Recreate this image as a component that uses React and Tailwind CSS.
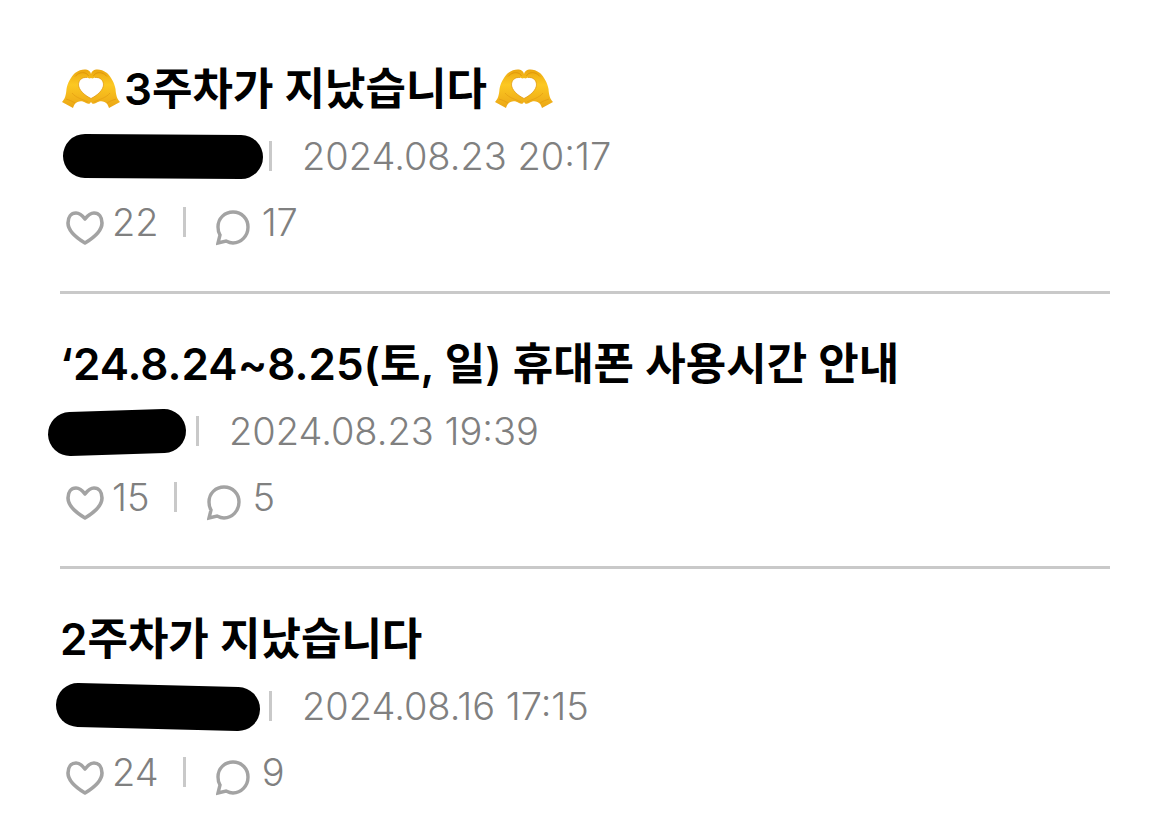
const posts = [
  {
    id: 1,
    title: "3주차가 지났습니다",
    hands: true,
    date: "2024.08.23 20:17",
    likes: 22,
    comments: 17,
    authorWidth: "w-[209px]",
    marker: { left: "left-0", width: 209, from: [25, 27], to: [181, 28] },
  },
  {
    id: 2,
    title: "‘24.8.24~8.25(토, 일) 휴대폰 사용시간 안내",
    hands: false,
    date: "2024.08.23 19:39",
    likes: 15,
    comments: 5,
    authorWidth: "w-[136px]",
    marker: { left: "-left-4", width: 150, from: [26, 30], to: [120, 27] },
  },
  {
    id: 3,
    title: "2주차가 지났습니다",
    hands: false,
    date: "2024.08.16 17:15",
    likes: 24,
    comments: 9,
    authorWidth: "w-[209px]",
    marker: { left: "-left-2", width: 216, from: [26, 26], to: [186, 30] },
  },
];

const Hand = () => (
  <g>
    <path
      d="M0 33 C3 30 4 26 4.500 20 C5.500 14 9 8 13 4 C17 1 21 0 24 0.500 C26.500 1 28.500 2.500 29 5 L29 9 C27.500 10 26 9 25 8.500 C20 8 16.500 11 16.500 16 C17 21 22 26 29 29.500 L29 33 C27.500 35.500 26 35 24 34 C21 32 18 32 15.500 33 C13 34 12 36 11 39 Z"
      fill="url(#skin)"
    />
    <path d="M13 7.500 C16 4 20 3 23 4 C25 4.500 26 6 26.500 7" fill="none" stroke="#e0970a" strokeWidth="1" />
    <path d="M25 8.500 C20 8 16.500 11 16.500 16 C17 21 22 26 29 29.500" fill="none" stroke="#dc930c" strokeWidth="0.7" />
    <path d="M10 24 C14 29 20 30 26 33" fill="none" stroke="#e9a515" strokeWidth="1" />
    <path d="M4 30 C7 31 10 32 13 34" fill="none" stroke="#e6a013" strokeWidth="1" />
  </g>
);

const HeartHands = () => (
  <svg viewBox="0 0 58 40" className="h-10 w-[58px] shrink-0" role="img" aria-label="heart hands">
    <defs>
      <linearGradient id="skin" x1="0" y1="0" x2="0" y2="1">
        <stop offset="0" stopColor="#eba710" />
        <stop offset="0.4" stopColor="#fcc822" />
        <stop offset="1" stopColor="#eba615" />
      </linearGradient>
    </defs>
    <Hand />
    <g transform="translate(58 0) scale(-1 1)">
      <Hand />
    </g>
  </svg>
);

const HeartIcon = () => (
  <svg viewBox="0 0 38 34" className="h-[34px] w-[38px]" fill="none" stroke="#a3a3a3" strokeWidth="3.6" strokeLinejoin="round">
    <path d="M19 8 C16 4 13 2 10 2 C5 2 2 6 2 12 C2 20 9 26 19 32 C29 26 36 20 36 12 C36 6 33 2 28 2 C25 2 22 4 19 8 Z" />
  </svg>
);

const CommentIcon = () => (
  <svg viewBox="0 0 34 36" className="h-9 w-[34px]" fill="none" stroke="#a3a3a3" strokeWidth="3.4">
    <path d="M2 33 L4 25 C2 22 2 20 2 17 C2 8 9 2 17 2 C26 2 32 9 32 17 C32 26 25 33 17 33 C14 33 12 32 10 31 Z" />
  </svg>
);

const Bar = () => <span className="h-[30px] w-[3px] shrink-0 bg-[#c9c9c9]"></span>;

const Author = ({ post }) => {
  const { left, width, from, to } = post.marker;
  return (
    <span className={`relative h-[54px] shrink-0 ${post.authorWidth}`}>
      <svg width={width} height="54" className={`absolute top-0 max-w-none ${left}`} aria-hidden="true">
        <line x1={from[0]} y1={from[1]} x2={to[0]} y2={to[1]} stroke="#000" strokeWidth="44" strokeLinecap="round" />
      </svg>
    </span>
  );
};

const Post = ({ post }) => (
  <li className="border-b-[3px] border-[#c9c9c9] pt-10 pb-9 last:border-b-0">
    <h2 className="flex h-[60px] items-center text-[44px] leading-[60px] font-semibold text-black">
      {post.hands && <span className="pr-1 pl-0.5"><HeartHands /></span>}
      <span>{post.title}</span>
      {post.hands && <span className="pl-2"><HeartHands /></span>}
    </h2>
    <div className="mt-1 flex h-[66px] items-center">
      <Author post={post} />
      <Bar />
      <time className="pl-[30px]">{post.date}</time>
    </div>
    <div className="flex h-[66px] items-center pl-1.5">
      <button type="button" aria-label={`좋아요 ${post.likes}`} className="flex items-center gap-2 pr-6">
        <span className="mt-3"><HeartIcon /></span>
        <span>{post.likes}</span>
      </button>
      <Bar />
      <button type="button" aria-label={`댓글 ${post.comments}`} className="flex items-center gap-3 pl-[30px]">
        <span className="mt-3"><CommentIcon /></span>
        <span>{post.comments}</span>
      </button>
    </div>
  </li>
);

export default function App() {
  return (
    <main className="bg-white px-[60px] pt-[19px] font-['Inter','Noto_Sans_CJK_KR',sans-serif] text-[38px] leading-[60px] font-light text-[#808080]">
      <ul>
        {posts.map((post) => (
          <Post key={post.id} post={post} />
        ))}
      </ul>
    </main>
  );
}
